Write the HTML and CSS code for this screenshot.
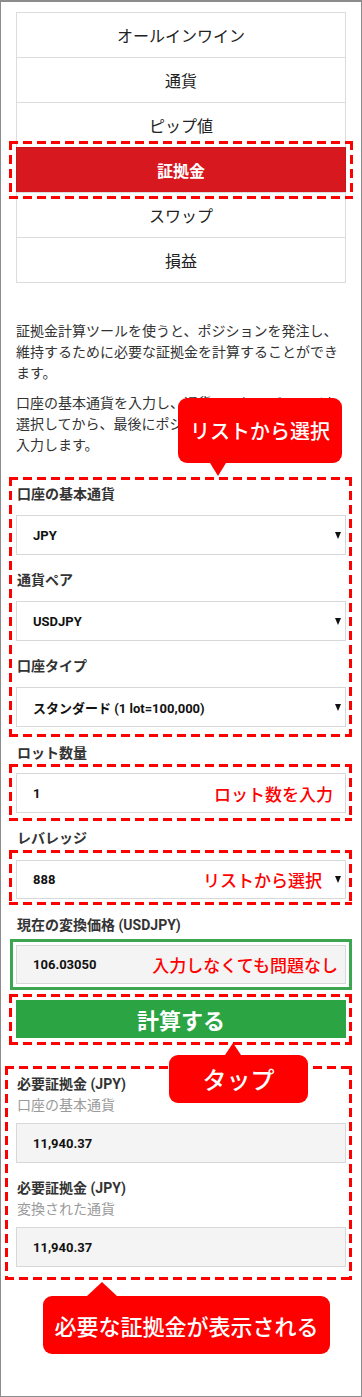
FILE: index.html
```html
<!DOCTYPE html>
<html lang="ja">
<head>
<meta charset="utf-8">
<title>証拠金計算ツール</title>
<link rel="stylesheet" href="styles.css">
</head>
<body>
<div class="frame">
  <ul class="tabs">
    <li class="tab">オールインワイン</li>
    <li class="tab">通貨</li>
    <li class="tab">ピップ値</li>
    <li class="tab active">証拠金</li>
    <li class="tab">スワップ</li>
    <li class="tab">損益</li>
  </ul>

  <p class="desc first">証拠金計算ツールを使うと、ポジションを発注し、維持するために必要な証拠金を計算することができます。</p>
  <p class="desc second">口座の基本通貨を入力し、通貨ペアとレバレッジを選択してから、最後にポジションの取引ロット数を入力します。</p>

  <div class="dash box-account">
    <div class="callout callout-list">リストから選択</div>
    <div class="group">
      <div class="label">口座の基本通貨</div>
      <div class="field"><span class="value">JPY</span><span class="arrow"></span></div>
    </div>
    <div class="group">
      <div class="label">通貨ペア</div>
      <div class="field"><span class="value">USDJPY</span><span class="arrow"></span></div>
    </div>
    <div class="group">
      <div class="label">口座タイプ</div>
      <div class="field"><span class="value">スタンダード (1 lot=100,000)</span><span class="arrow"></span></div>
    </div>
  </div>

  <div class="label outside lot-label">ロット数量</div>
  <div class="dash box-lot">
    <div class="field"><span class="value">1</span><span class="note note-lot">ロット数を入力</span></div>
  </div>

  <div class="label outside lev-label">レバレッジ</div>
  <div class="dash box-lev">
    <div class="field field-lev"><span class="value">888</span><span class="note note-lev">リストから選択</span><span class="arrow"></span></div>
  </div>

  <div class="label outside rate-label">現在の変換価格 (USDJPY)</div>
  <div class="green-box">
    <div class="field readonly field-rate"><span class="value">106.03050</span><span class="note note-rate">入力しなくても問題なし</span></div>
  </div>

  <div class="dash box-btn">
    <div class="calc">計算する</div>
    <div class="callout callout-tap">タップ</div>
  </div>

  <div class="dash box-result">
    <div class="label result-label">必要証拠金 (JPY)</div>
    <div class="sub">口座の基本通貨</div>
    <div class="field readonly result-field"><span class="value">11,940.37</span></div>
    <div class="label result-label second-result">必要証拠金 (JPY)</div>
    <div class="sub">変換された通貨</div>
    <div class="field readonly result-field"><span class="value">11,940.37</span></div>
    <div class="callout callout-result">必要な証拠金が表示される</div>
  </div>
</div>
</body>
</html>
```
FILE: styles.css
```css
* { box-sizing: border-box; }

body {
  margin: 0;
  font-family: Roboto, "Noto Sans CJK JP", sans-serif;
  color: #333;
  background: #fff;
}

.frame {
  width: 362px;
  height: 1397px;
  border: 1px solid #8c8c8c;
  border-top-width: 2px;
  padding: 10px 15px 0 15px;
  overflow: hidden;
  position: relative;
  background: #fff;
}

/* tabs */
.tabs {
  list-style: none;
  margin: 0;
  padding: 0;
}
.tab {
  height: 45px;
  border: 1px solid #dcdcdc;
  border-bottom: none;
  display: flex;
  align-items: center;
  justify-content: center;
  font-family: "Noto Sans CJK JP", sans-serif;
  font-size: 16px;
  color: #222;
}
.tab:last-child {
  height: 46px;
  border-bottom: 1px solid #dcdcdc;
}
.tab.active {
  background: #d7181f;
  border-color: #c8161d;
  color: #fff;
  font-weight: 700;
  position: relative;
}

/* dashed annotation outline, drawn with gradients for long dashes */
.tab.active::after,
.dash::before {
  content: "";
  position: absolute;
  pointer-events: none;
  background:
    repeating-linear-gradient(90deg, #f00 0 9px, transparent 9px 14px) left top / 100% 3px no-repeat,
    repeating-linear-gradient(90deg, #f00 0 9px, transparent 9px 14px) left bottom / 100% 3px no-repeat,
    repeating-linear-gradient(180deg, #f00 0 9px, transparent 9px 14px) left top / 3px 100% no-repeat,
    repeating-linear-gradient(180deg, #f00 0 9px, transparent 9px 14px) right top / 3px 100% no-repeat;
}
.tab.active::after {
  left: -8px;
  right: -8px;
  top: -7px;
  bottom: -7px;
}
.dash::before {
  top: -3px;
  left: -3px;
  right: -3px;
  bottom: -3px;
}

/* description */
.desc {
  font-family: "Noto Sans CJK JP", sans-serif;
  font-size: 14px;
  line-height: 21px;
  margin: 0;
  color: #333;
}
.desc.first { margin-top: 37px; }
.desc.second { margin-top: 9px; }

/* annotation boxes */
.dash {
  border: 3px solid transparent;
  margin: 0 -6px 0 -7px;
  padding: 0 3px 0 4px;
  position: relative;
}
.box-account { margin-top: 22px; padding-top: 4px; padding-bottom: 7px; }
.box-lot { margin-top: 1px; padding-top: 6px; padding-bottom: 5px; }
.box-lev { margin-top: 2px; padding-top: 7px; padding-bottom: 3px; }
.box-btn { margin-top: 4px; padding-top: 3px; padding-bottom: 4px; }
.box-result {
  margin-top: 21px;
  margin-left: -11px;
  padding-left: 8px;
  padding-top: 6px;
  padding-bottom: 10px;
}

.green-box {
  border: 3px solid #3ba64f;
  margin: 4px -6px 0 -6px;
  padding: 3px 3px;
}

/* labels */
.group + .group { margin-top: 15px; }
.label {
  font-family: Roboto, "Noto Sans CJK JP", sans-serif;
  font-size: 14px;
  font-weight: 700;
  line-height: 20px;
  color: #333;
  padding-left: 1px;
}
.group .label { margin-bottom: 11px; }
.lot-label { margin-top: 6px; }
.lev-label { margin-top: 7px; }
.rate-label { margin-top: 10px; }

.result-label { line-height: 19px; }
.second-result { margin-top: 16px; }
.sub {
  font-family: "Noto Sans CJK JP", sans-serif;
  font-size: 14px;
  line-height: 20px;
  color: #9a9a9a;
  padding-left: 1px;
}
.result-field { margin-top: 9px; }

/* fields */
.field {
  height: 40px;
  border: 1px solid #d8d8d8;
  background: #fff;
  display: flex;
  align-items: center;
  padding: 0 4px 0 16px;
}
.field-lev { height: 39px; }
.field-rate { height: 39px; }
.field.readonly { background: #f4f4f4; }
.value {
  font-family: Roboto, "Noto Sans CJK JP", sans-serif;
  font-size: 13px;
  font-weight: 700;
  color: #111;
}
.arrow {
  margin-left: auto;
  width: 0;
  height: 0;
  border-left: 3.5px solid transparent;
  border-right: 3.5px solid transparent;
  border-top: 7px solid #111;
}
.note {
  margin-left: auto;
  font-family: "Noto Sans CJK JP", sans-serif;
  font-size: 17px;
  font-weight: 500;
  color: #f00;
  line-height: 1;
}
.note-lot { margin-right: 8px; }
.note-lev { margin-right: 13px; }
.note-lev + .arrow { margin-left: 0; }
.note-rate { margin-right: 3px; }

/* button */
.calc {
  height: 38px;
  background: #2ba444;
  color: #fff;
  font-family: "Noto Sans CJK JP", sans-serif;
  font-size: 22px;
  font-weight: 700;
  display: flex;
  align-items: center;
  justify-content: center;
}

/* callouts */
.callout {
  position: absolute;
  z-index: 5;
  background: #f00;
  color: #fff;
  border-radius: 9px;
  display: flex;
  align-items: center;
  justify-content: center;
  font-family: "Noto Sans CJK JP", sans-serif;
  font-weight: 500;
  line-height: 1;
}
.callout::after {
  content: "";
  position: absolute;
  width: 0;
  height: 0;
}
.callout-list {
  top: -82px;
  left: 166px;
  width: 164px;
  height: 65px;
  font-size: 20px;
}
.callout-list::after {
  top: 100%;
  left: 32px;
  border-left: 8px solid transparent;
  border-right: 8px solid transparent;
  border-top: 13px solid #f00;
}
.callout-tap {
  top: 58px;
  left: 157px;
  width: 139px;
  height: 48px;
  font-size: 24px;
}
.callout-tap::after {
  bottom: 100%;
  left: 56px;
  border-left: 8px solid transparent;
  border-right: 8px solid transparent;
  border-bottom: 12px solid #f00;
}
.callout-result {
  top: 227px;
  left: 35px;
  width: 287px;
  height: 58px;
  font-size: 22px;
}
.callout-result::after {
  bottom: 100%;
  left: 44px;
  border-left: 15px solid transparent;
  border-right: 15px solid transparent;
  border-bottom: 14px solid #f00;
}
```
